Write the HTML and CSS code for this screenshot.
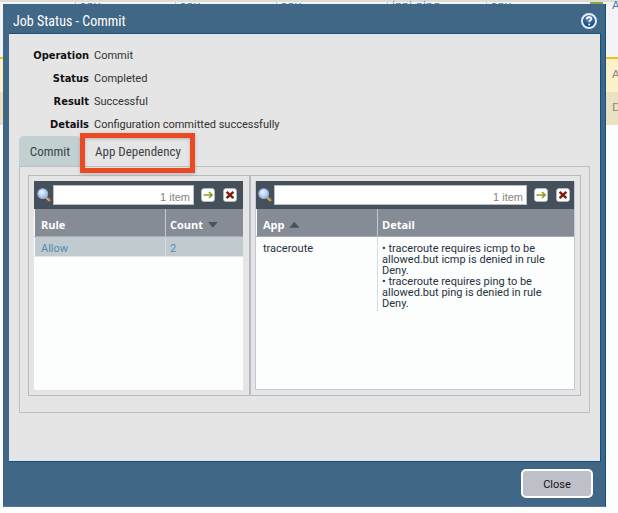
FILE: index.html
```html
<!DOCTYPE html>
<html lang="en">
<head>
<meta charset="utf-8">
<title>Job Status - Commit</title>
<link rel="stylesheet" href="styles.css">
</head>
<body>
<svg class="defs" aria-hidden="true">
  <defs>
    <radialGradient id="lens" cx="40%" cy="35%"><stop offset="0" stop-color="#f2f8ff"/><stop offset="1" stop-color="#a9c8f0"/></radialGradient>
    <radialGradient id="ball" cx="50%" cy="30%"><stop offset="0" stop-color="#6f9dcb"/><stop offset="1" stop-color="#174c86"/></radialGradient>
    <symbol id="i-search" viewBox="0 0 14 14">
      <path d="M9 9l3.3 3.2" stroke="#c08a55" stroke-width="2.6" stroke-linecap="round"/>
      <path d="M8.6 9.4l3 2.9" stroke="#f0c48c" stroke-width="1"/>
      <circle cx="5.7" cy="5.6" r="4.9" fill="url(#lens)" stroke="#8fb0e2" stroke-width="1.1"/>
    </symbol>
    <symbol id="i-go" viewBox="0 0 14 14">
      <rect x=".5" y=".5" width="13" height="13" rx="2.5" fill="#fff" stroke="#b9c9cf" stroke-width=".6"/>
      <path d="M2.5 7h8M8 4l3.2 3L8 10" fill="none" stroke="#86a01c" stroke-width="1.6"/>
    </symbol>
    <symbol id="i-clear" viewBox="0 0 14 14">
      <rect x=".5" y=".5" width="13" height="13" rx="2.5" fill="#fff" stroke="#b9c9cf" stroke-width=".6"/>
      <path d="M3.6 3.8l6.8 6.4M10.4 3.8l-6.8 6.4" stroke="#7c1f0c" stroke-width="2.5"/>
    </symbol>
  </defs>
</svg>

<div class="backdrop" aria-hidden="true">
  <div class="rules rules-first">
    <span class="cell">any</span><span class="cell">any</span><span class="cell">any</span><span class="cell">ipni-ping</span><span class="cell">any</span><span class="cell check"></span><span class="cell last">A</span>
  </div>
  <div class="rules rules-allow"><span>A</span></div>
  <div class="rules rules-deny"><span>D</span></div>
</div>

<div class="overlay">
  <section class="dialog" role="dialog" aria-labelledby="title">
    <header class="dialog-head">
      <h1 id="title">Job Status - Commit</h1>
      <button class="icon-btn" aria-label="Help">
        <svg width="16" height="16" viewBox="0 0 16 16"><circle cx="8" cy="8" r="7" fill="url(#ball)" stroke="#e3edf7" stroke-width="2"/><path d="M5.8 6.3c0-1.4 1-2.2 2.3-2.2s2.3.7 2.3 1.9c0 1.4-2.2 1.5-2.2 3.1" fill="none" stroke="#fff" stroke-width="1.6"/><circle cx="8.2" cy="11.4" r="1" fill="#fff"/></svg>
      </button>
    </header>

    <div class="dialog-body">
      <dl class="fields">
        <dt>Operation</dt><dd>Commit</dd>
        <dt>Status</dt><dd>Completed</dd>
        <dt>Result</dt><dd>Successful</dd>
        <dt>Details</dt><dd>Configuration committed successfully</dd>
      </dl>

      <div class="tabs" role="tablist">
        <button class="tab tab-idle" role="tab" aria-selected="false">Commit</button>
        <button class="tab tab-active" role="tab" aria-selected="true">App Dependency</button>
      </div>

      <div class="tab-panel" role="tabpanel">
        <div class="split">
          <div class="pane pane-rules">
            <div class="grid-box">
              <div class="toolbar">
                <svg width="14" height="14"><use href="#i-search"/></svg>
                <input type="text" placeholder="1 item" aria-label="Filter rules">
                <button class="icon-btn" aria-label="Apply filter"><svg width="14" height="14"><use href="#i-go"/></svg></button>
                <button class="icon-btn" aria-label="Clear filter"><svg width="14" height="14"><use href="#i-clear"/></svg></button>
              </div>
              <table>
                <colgroup><col class="col-rule"><col></colgroup>
                <thead><tr><th>Rule</th><th>Count <i class="sort down"></i></th></tr></thead>
                <tbody><tr class="selected"><td>Allow</td><td>2</td></tr></tbody>
              </table>
            </div>
          </div>
          <div class="pane pane-apps">
            <div class="grid-box framed">
              <div class="toolbar">
                <svg width="14" height="14"><use href="#i-search"/></svg>
                <input type="text" placeholder="1 item" aria-label="Filter apps">
                <button class="icon-btn" aria-label="Apply filter"><svg width="14" height="14"><use href="#i-go"/></svg></button>
                <button class="icon-btn" aria-label="Clear filter"><svg width="14" height="14"><use href="#i-clear"/></svg></button>
              </div>
              <table>
                <colgroup><col class="col-app"><col></colgroup>
                <thead><tr><th>App <i class="sort up"></i></th><th>Detail</th></tr></thead>
                <tbody><tr><td>traceroute</td><td>• traceroute requires icmp to be<br>allowed.but icmp is denied in rule<br>Deny.<br>• traceroute requires ping to be<br>allowed.but ping is denied in rule<br>Deny.</td></tr></tbody>
              </table>
            </div>
          </div>
        </div>
      </div>
    </div>

    <footer class="dialog-foot"><button class="close">Close</button></footer>
  </section>
</div>
</body>
</html>
```
FILE: styles.css
```css
* { box-sizing: border-box; }

body {
  margin: 0;
  background: #fcfdfd;
  color: #26333d;
  font: 11px/11px Roboto, sans-serif;
}

button { font: inherit; cursor: pointer; }

.defs { position: absolute; width: 0; height: 0; }

/* Rule list behind the dialog */
.backdrop {
  position: absolute;
  inset: 0;
  overflow: hidden;
}

.rules {
  display: flex;
  justify-content: flex-end;
  height: 33px;
  padding: 9px 0;
  color: #868684;
  font: 11px/14px "DejaVu Sans", sans-serif;
}

.rules span:last-child { width: 6px; }

.rules-first {
  display: grid;
  grid-template-columns: 100px 101px 111px 99px 101px 19px 1fr;
  height: 59px;
  padding: 0 0 0 75px;
  border-top: 2px solid #dcddd8;
  border-bottom: 2px solid #f2c114;
  background: #f3f4f6;
  color: #4a7ba6;
  line-height: 7px;
}

.cell { padding-left: 4px; border-left: 1px solid #c4c8cc; }
.rules-first .check { height: 8px; border: 3px solid #f3f4f6; border-top: 0; background: #8fa63a; }
.rules-first .last { width: auto; padding-left: 6px; border: 0; }

.rules-allow { background: #fdf1cb; }
.rules-deny { background: #ebe2c3; }

/* Dialog */
.overlay {
  position: absolute;
  inset: 0;
  padding: 4px 12px 6px 3px;
}

.dialog {
  display: flex;
  flex-direction: column;
  min-height: 100%;
  padding: 0 4px 0 6px;
  border-right: 1px solid #10527f;
  border-bottom: 1px solid #5a76a0;
  background: #416786;
}

.dialog-head {
  display: flex;
  align-items: center;
  justify-content: space-between;
  height: 29px;
  padding: 4px 4px 0;
}

.dialog-head h1 {
  margin: 0;
  color: #fff;
  font: 14px/20px "Roboto Condensed", Roboto, sans-serif;
}

.icon-btn {
  display: flex;
  padding: 0;
  border: 0;
  background: none;
}

.dialog-body {
  flex: 1;
  padding: 10px 10px 48px;
  border: solid #10527f;
  border-width: 1px 1px 1px 0;
  background: #e5e5e5;
}

.fields {
  display: grid;
  grid-template-columns: 70px 1fr;
  grid-auto-rows: 23px;
  align-items: center;
  column-gap: 5px;
  margin: 0;
  color: #303030;
}

.fields dt {
  color: #111;
  font: bold 11px/14px "DejaVu Sans Condensed", "DejaVu Sans", sans-serif;
  text-align: right;
}

.fields dd { margin: 0; }

.tabs { display: flex; height: 30px; }

.tab {
  height: 30px;
  padding: 2px 0 0;
  border: 0;
  background: none;
  color: #3c4348;
  font: 13px/28px "Roboto Condensed", Roboto, sans-serif;
  white-space: nowrap;
}

.tab-idle {
  width: 62px;
  border-radius: 5px 5px 0 0;
  background: #c2d0d2;
}

.tab-active { position: relative; width: 114px; }

/* Call-out frame round the active tab */
.tab-active::after {
  content: "";
  position: absolute;
  inset: -3px 0 -7px -1px;
  border: 5px solid #ea4a22;
  box-shadow: 0 1px 3px #8888, inset 0 1px 3px #8888;
}

.tab-panel {
  padding: 8px;
  padding-bottom: 16px;
  border: 1px solid #bbbfc6;
}

.split {
  display: grid;
  grid-template-columns: 222px 1fr;
  height: 221px;
  border: 1px solid #b5bac4;
}

.pane { padding: 5px; }
.pane-rules { padding-right: 6px; border-right: 2px solid #b5bac4; }
.pane-apps { padding-left: 4px; }

.grid-box { height: 209px; background: #fcfdfd; }
.framed { border: solid #c4c8d4; border-width: 0 1px 1px; }

.toolbar {
  display: flex;
  align-items: center;
  height: 28px;
  padding: 0 6px 0 3px;
  background: #45505b;
}

.framed .toolbar { padding: 0 4px 0 2px; }

.toolbar input {
  flex: 1;
  min-width: 0;
  height: 20px;
  margin: 0 7px 0 2px;
  padding: 3px 3px 0;
  border: 1px solid #b9c1c6;
  background: #fff;
  color: #333;
  font: 11px/14px "Liberation Sans", sans-serif;
  text-align: right;
}

.toolbar input::placeholder { color: #858585; }
.toolbar .icon-btn + .icon-btn { margin-left: 8px; }

table {
  width: 100%;
  border-collapse: collapse;
  table-layout: fixed;
}

.col-rule { width: 131px; }
.col-app { width: 121px; }

th {
  height: 27px;
  padding: 4px 4px 0;
  border-left: 1px solid #c5c9cf;
  border-bottom: 1px solid #a9adb5;
  background: #868c95;
  color: #fff;
  font: bold 11px/11px "Open Sans", sans-serif;
  text-align: left;
}

td {
  padding: 6px 4px 2px;
  border-left: 1px solid #d5dde3;
  vertical-align: top;
}

th:first-child, td:first-child { padding-left: 6px; border-left-color: transparent; }

.selected td {
  border-bottom: 1px solid #dfe6e8;
  background: #bfcbce;
  color: #5688b4;
}

.sort {
  display: inline-block;
  width: 10px;
  height: 6px;
  margin-left: 2px;
  background: #4a525c;
  vertical-align: 1px;
}

.down { clip-path: polygon(0 0, 100% 0, 50% 100%); }
.up { clip-path: polygon(50% 0, 100% 100%, 0 100%); }

.dialog-foot {
  display: flex;
  justify-content: flex-end;
  padding: 7px 8px 8px;
}

.close {
  width: 72px;
  height: 29px;
  padding: 2px 0 0;
  border: 2px solid #fff;
  border-radius: 5px;
  background: #bdc0c9;
  color: #111;
}
```
